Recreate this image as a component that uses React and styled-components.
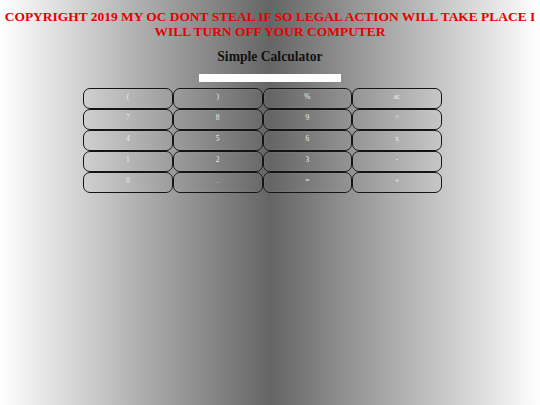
import React from 'react';
import styled, { createGlobalStyle } from 'styled-components';

const GlobalStyle = createGlobalStyle`
  html, body {
    margin: 0;
    padding: 0;
  }

  body {
    min-height: 405px;
    background: linear-gradient(to right, #ffffff, #656565 50%, #ffffff);
    font-family: "Liberation Serif", "Times New Roman", serif;
  }
`;

const Page = styled.div`
  display: flex;
  flex-direction: column;
  align-items: center;
  padding-top: 9px;
`;

const Warning = styled.h1`
  margin: 0;
  width: 540px;
  font-size: 13.45px;
  line-height: 15.3px;
  font-weight: bold;
  color: #e60000;
  text-align: center;
`;

const Title = styled.h3`
  margin: 9px 0 0;
  font-size: 13.6px;
  line-height: 16px;
  font-weight: bold;
  color: #111;
`;

const Display = styled.input`
  margin-top: 9px;
  width: 142px;
  height: 8px;
  padding: 0;
  border: none;
  background: #fff;
  outline: none;
`;

const Keypad = styled.div`
  display: grid;
  grid-template-columns: repeat(4, 89.75px);
  grid-auto-rows: 21px;
  margin: 6px 0 0 -15px;
`;

const Key = styled.button`
  box-sizing: border-box;
  height: 21px;
  padding: 0 0 2px;
  border: 1px solid #141414;
  border-bottom-width: 1.5px;
  border-radius: 7px;
  background: transparent;
  box-shadow: inset 0 0 1px rgba(255, 255, 255, 0.35);
  color: #ececec;
  font-family: "Liberation Serif", "Times New Roman", serif;
  font-size: 7.5px;
  line-height: 1;
  cursor: pointer;
`;

const keys = [
  '(', ')', '%', 'ac',
  '7', '8', '9', '÷',
  '4', '5', '6', 'x',
  '1', '2', '3', '-',
  '0', '.', '=', '+',
];

export default function App() {
  return (
    <>
      <GlobalStyle />
      <Page>
        <Warning>
          COPYRIGHT 2019 MY OC DONT STEAL IF SO LEGAL ACTION WILL TAKE PLACE I WILL TURN OFF YOUR COMPUTER
        </Warning>
        <Title>Simple Calculator</Title>
        <Display type="text" readOnly />
        <Keypad>
          {keys.map(k => (
            <Key key={k}>{k}</Key>
          ))}
        </Keypad>
      </Page>
    </>
  );
}
